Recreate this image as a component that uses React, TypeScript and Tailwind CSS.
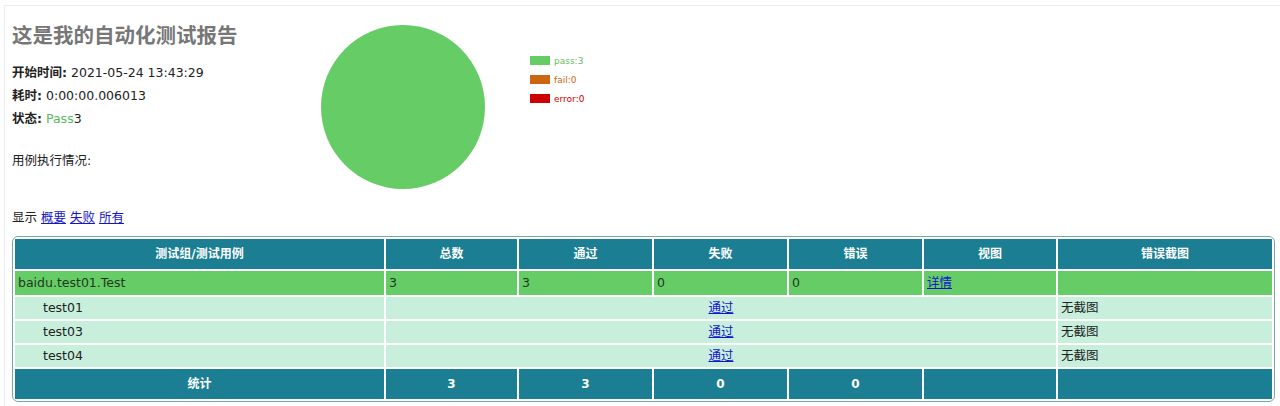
import React from "react";

const F = { fontFamily: '"DejaVu Sans", Verdana, "Noto Sans CJK SC", sans-serif' };

export default function App() {
  const th = "bg-[#1b7e92] text-white font-bold text-[12px] text-center h-[30px] p-0";
  const tdG = "bg-[#66cc66] text-[#1e3a1e] text-[12.5px] px-[3px] h-[24px]";
  const tdT = "bg-[#c7efdc] text-[#222] text-[12.5px] h-[22px]";
  const tf = "bg-[#1b7e92] text-white font-bold text-[12px] text-center h-[30px]";
  return (
    <div className="w-[1280px] h-[406px] bg-white overflow-hidden" style={F}>
      <div className="mt-[5px] ml-[4px] border-t border-l border-[#ececec] h-[401px] pl-[7px]">
        <div className="flex">
          <div className="w-[306px] shrink-0">
            <h1 className="text-[20.5px] font-bold text-[#777] mt-[16px] leading-[28px]">这是我的自动化测试报告</h1>
            <div className="text-[12.5px] text-[#222] leading-[23px] mt-[11px]">
              <div><b>开始时间:</b> 2021-05-24 13:43:29</div>
              <div><b>耗时:</b> 0:00:00.006013</div>
              <div><b>状态:</b> <span className="text-[#5cb85c]">Pass</span>3</div>
            </div>
            <div className="text-[12.5px] text-[#222] mt-[19px] leading-[23px]">用例执行情况:</div>
          </div>
          <svg width="320" height="200" viewBox="0 0 320 200" className="shrink-0 -mt-[5px]">
            <circle cx="85" cy="106" r="82" fill="#66cc66" />
            <rect x="212" y="55" width="20" height="9" fill="#66cc66" />
            <text x="236" y="63" fontSize="9" fill="#66bb66" fontFamily="DejaVu Sans, sans-serif">pass:3</text>
            <rect x="212" y="74" width="20" height="9" fill="#cc6611" />
            <text x="236" y="82" fontSize="9" fill="#cc6611" fontFamily="DejaVu Sans, sans-serif">fail:0</text>
            <rect x="212" y="93" width="20" height="9" fill="#cc0000" />
            <text x="236" y="101" fontSize="9" fill="#cc0000" fontFamily="DejaVu Sans, sans-serif">error:0</text>
          </svg>
        </div>
        <div className="text-[12.5px] text-[#222] mt-[7px] leading-[20px]">
          显示 <a className="text-[#1515cc] underline" href="#">概要</a> <a className="text-[#1515cc] underline" href="#">失败</a> <a className="text-[#1515cc] underline" href="#">所有</a>
        </div>
        <div className="mt-[8px] w-[1263px] border border-[#7fa3ab] rounded-[6px] overflow-hidden">
          <table className="w-full table-fixed border-separate border-spacing-[2px]">
            <colgroup>
              <col className="w-[369px]" />
              <col className="w-[131px]" />
              <col className="w-[133px]" />
              <col className="w-[133px]" />
              <col className="w-[133px]" />
              <col className="w-[132px]" />
              <col />
            </colgroup>
            <thead>
              <tr>
                <th className={th}>测试组/测试用例</th>
                <th className={th}>总数</th>
                <th className={th}>通过</th>
                <th className={th}>失败</th>
                <th className={th}>错误</th>
                <th className={th}>视图</th>
                <th className={th}>错误截图</th>
              </tr>
            </thead>
            <tbody>
              <tr>
                <td className={tdG}>baidu.test01.Test</td>
                <td className={tdG}>3</td>
                <td className={tdG}>3</td>
                <td className={tdG}>0</td>
                <td className={tdG}>0</td>
                <td className={tdG}><a href="#" className="text-[#1515cc] underline">详情</a></td>
                <td className={tdG}></td>
              </tr>
              {["test01", "test03", "test04"].map((t) => (
                <tr key={t}>
                  <td className={tdT + " pl-[28px]"}>{t}</td>
                  <td className={tdT + " text-center"} colSpan={5}>
                    <a href="#" className="text-[#1515cc] underline">通过</a>
                  </td>
                  <td className={tdT + " px-[3px]"}>无截图</td>
                </tr>
              ))}
              <tr>
                <td className={tf}>统计</td>
                <td className={tf}>3</td>
                <td className={tf}>3</td>
                <td className={tf}>0</td>
                <td className={tf}>0</td>
                <td className={tf}></td>
                <td className={tf}></td>
              </tr>
            </tbody>
          </table>
        </div>
      </div>
    </div>
  );
}
